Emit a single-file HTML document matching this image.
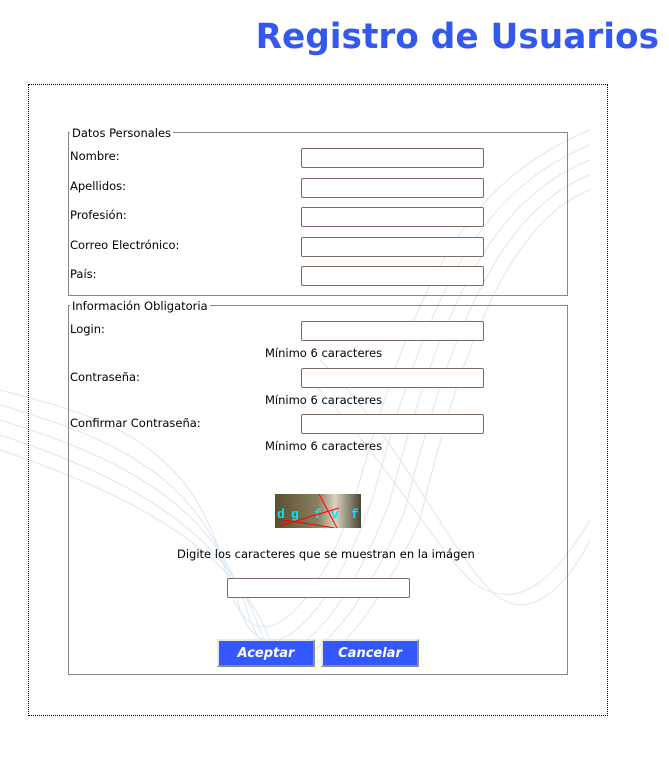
<!DOCTYPE html>
<html><head><meta charset="utf-8"><style>
body{margin:0;width:669px;height:764px;background:#fff;position:relative;overflow:hidden;font-family:"DejaVu Sans",sans-serif;font-size:11.5px;color:#000}
.a{position:absolute}
h1{position:absolute;right:10px;top:17px;margin:0;font:bold 34.3px "DejaVu Sans",sans-serif;color:#3358f0;white-space:nowrap}
.box{position:absolute;left:28px;top:84px;width:578px;height:630px;border:1px dotted #000}
.fs{position:absolute;border:1px solid #8a8580}
.lg{position:absolute;background:#fff;padding:0 2px 0 2px;top:-7px;left:1px}
.in{position:absolute;width:181px;height:18px;border:1px solid #7a6a60;border-radius:2px;background:#fff}
.btn{position:absolute;width:94px;height:24px;background:#3358ff;border:2px solid;border-color:#e8e8e8 #8a8a8a #8a8a8a #e8e8e8;color:#fff;font:italic bold 13px "DejaVu Sans",sans-serif;text-align:center;line-height:26px}
</style></head><body>
<h1>Registro de Usuarios</h1>
<svg class="a" style="left:0;top:120px" width="620" height="560" fill="none" stroke="#dfe8f1" stroke-width="1.1">
<path d="M0 270 C120 300 200 330 230 470 C260 560 330 470 360 360 C420 150 470 60 590 10"/>
<path d="M0 285 C120 320 210 360 240 490 C270 570 340 480 375 370 C430 170 480 70 590 25"/>
<path d="M0 300 C130 340 220 390 250 500 C280 580 350 490 390 380 C440 190 490 80 590 40"/>
<path d="M0 315 C140 360 230 420 260 510 C290 585 360 500 405 390 C450 210 500 90 590 55"/>
<path d="M0 330 C150 380 240 440 270 520 C300 590 370 510 420 400 C460 230 510 100 590 70"/>
<path d="M300 250 C380 330 430 420 470 460 C520 500 560 450 590 400"/>
<path d="M320 240 C400 320 450 430 490 470 C530 510 570 460 590 420"/>
</svg>
<div class="box"></div>
<div class="fs" style="left:68px;top:132px;width:498px;height:162px"><span class="lg">Datos Personales</span></div>
<div class="fs" style="left:68px;top:305px;width:498px;height:368px"><span class="lg">Información Obligatoria</span></div>
<div class="a" style="left:70px;top:149px">Nombre:</div><div class="in" style="left:301px;top:148px"></div>
<div class="a" style="left:70px;top:179px">Apellidos:</div><div class="in" style="left:301px;top:178px"></div>
<div class="a" style="left:70px;top:208px">Profesión:</div><div class="in" style="left:301px;top:207px"></div>
<div class="a" style="left:70px;top:238px">Correo Electrónico:</div><div class="in" style="left:301px;top:237px"></div>
<div class="a" style="left:70px;top:267px">País:</div><div class="in" style="left:301px;top:266px"></div>
<div class="a" style="left:70px;top:322px">Login:</div><div class="in" style="left:301px;top:321px"></div>
<div class="a" style="left:265px;top:346px">Mínimo 6 caracteres</div>
<div class="a" style="left:70px;top:370px">Contraseña:</div><div class="in" style="left:301px;top:368px"></div>
<div class="a" style="left:265px;top:393px">Mínimo 6 caracteres</div>
<div class="a" style="left:70px;top:416px">Confirmar Contraseña:</div><div class="in" style="left:301px;top:414px"></div>
<div class="a" style="left:265px;top:439px">Mínimo 6 caracteres</div>
<svg class="a" style="left:275px;top:494px" width="86" height="34">
<defs><linearGradient id="g" x1="0" x2="1"><stop offset="0" stop-color="#5a5030"/><stop offset=".5" stop-color="#8a8060"/><stop offset=".7" stop-color="#d8d4c0"/><stop offset="1" stop-color="#4a4530"/></linearGradient></defs>
<rect width="86" height="34" fill="url(#g)"/>
<g fill="#00e8ff" font-family="Liberation Mono,monospace" font-size="13" font-weight="bold"><text x="2" y="24">d</text><text x="16" y="24">g</text><text x="39" y="24">f</text><text x="56" y="24">v</text><text x="76" y="24">f</text></g>
<g stroke="#f00" stroke-width="1"><line x1="44" y1="0" x2="62" y2="34"/><line x1="4" y1="32" x2="64" y2="14"/><line x1="2" y1="25" x2="60" y2="34"/></g>
</svg>
<div class="a" style="left:177px;top:547px">Digite los caracteres que se muestran en la imágen</div>
<div class="in" style="left:227px;top:578px"></div>
<div class="btn" style="left:217px;top:639px">Aceptar</div>
<div class="btn" style="left:321px;top:639px">Cancelar</div>
</body></html>
